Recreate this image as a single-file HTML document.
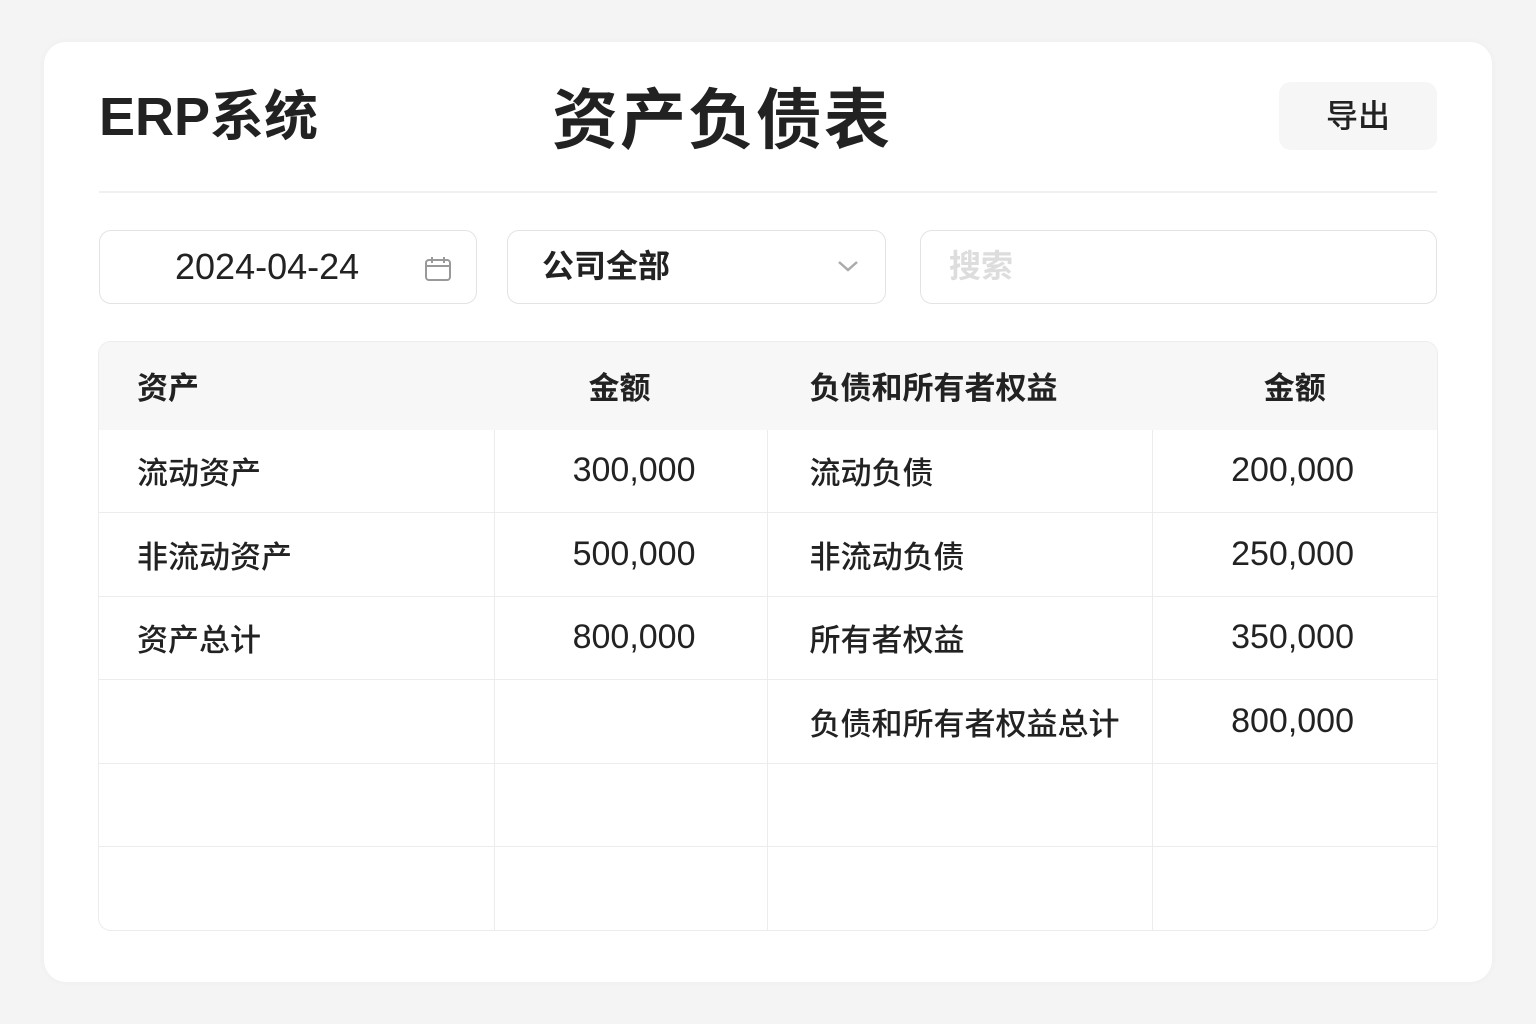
<!DOCTYPE html>
<html><head><meta charset="utf-8"><style>
*{margin:0;padding:0;box-sizing:border-box}
body{width:1536px;height:1024px;background:#f4f4f4;font-family:"Liberation Sans","Noto Sans CJK SC",sans-serif;color:#222;position:relative;overflow:hidden}
.card{position:absolute;left:44px;top:42px;width:1448px;height:940px;background:#fff;border-radius:22px;box-shadow:0 0 8px rgba(0,0,0,.03)}
.abs{position:absolute}
.t1{left:99px;top:84px;font-size:54px;font-weight:700;line-height:66px}
.t2{left:552px;top:80px;font-size:66px;font-weight:700;line-height:80px;letter-spacing:2px}
.btn{left:1279px;top:82px;width:158px;height:68px;background:#f6f6f6;border-radius:12px;font-size:32px;line-height:68px;text-align:center;font-weight:500}
.hr{left:99px;top:191px;width:1338px;height:2px;background:#f0f0f0}
.in{top:230px;height:74px;border:1.5px solid #e3e3e3;border-radius:12px;font-size:32px;line-height:71px}
table{position:absolute;left:99px;top:342px;width:1338px;border-collapse:collapse;border-radius:12px;overflow:hidden;border-style:hidden;box-shadow:0 0 0 1px #ececec}
td,th{border:1px solid #ececec;height:83.5px;font-size:31px;font-weight:500;padding:0}
th{background:#f7f7f7;border-color:#f7f7f7;height:87px;font-weight:700;text-align:left}
.l{padding-left:38px;text-align:left}
.n{text-align:right;padding-right:71px;font-size:34px}
.n2{text-align:right;padding-right:83px;font-size:34px}
</style></head><body>
<div class="card"></div>
<div class="abs t1">ERP系统</div>
<div class="abs t2">资产负债表</div>
<div class="abs btn">导出</div>
<div class="abs hr"></div>
<div class="abs in" style="left:99px;width:378px;padding-left:75px;font-size:36px">2024-04-24
<svg class="abs" style="left:324px;top:24px" width="28" height="28" viewBox="0 0 28 28" fill="none" stroke="#999" stroke-width="2"><rect x="2" y="5" width="24" height="20" rx="3"/><path d="M2 11h24M8 2v6M20 2v6"/></svg></div>
<div class="abs in" style="left:507px;width:379px;padding-left:34px;font-weight:700">公司全部
<svg class="abs" style="left:328px;top:27px" width="24" height="16" viewBox="0 0 24 16" fill="none" stroke="#aaa" stroke-width="2.5"><path d="M3 4l9 8 9-8"/></svg></div>
<div class="abs in" style="left:920px;width:517px;padding-left:28px;color:#ddd;font-weight:700">搜索</div>
<table>
<tr><th class="l" style="width:395px">资产</th><th style="width:273px;text-align:center;padding-right:22px">金额</th><th class="l" style="width:385px;padding-left:42px">负债和所有者权益</th><th style="text-align:center">金额</th></tr>
<tr><td class="l">流动资产</td><td class="n">300,000</td><td class="l" style="padding-left:42px">流动负债</td><td class="n2">200,000</td></tr>
<tr><td class="l">非流动资产</td><td class="n">500,000</td><td class="l" style="padding-left:42px">非流动负债</td><td class="n2">250,000</td></tr>
<tr><td class="l">资产总计</td><td class="n">800,000</td><td class="l" style="padding-left:42px">所有者权益</td><td class="n2">350,000</td></tr>
<tr><td></td><td></td><td class="l" style="padding-left:42px">负债和所有者权益总计</td><td class="n2">800,000</td></tr>
<tr><td></td><td></td><td></td><td></td></tr>
<tr><td></td><td></td><td></td><td></td></tr>
</table>
</body></html>
